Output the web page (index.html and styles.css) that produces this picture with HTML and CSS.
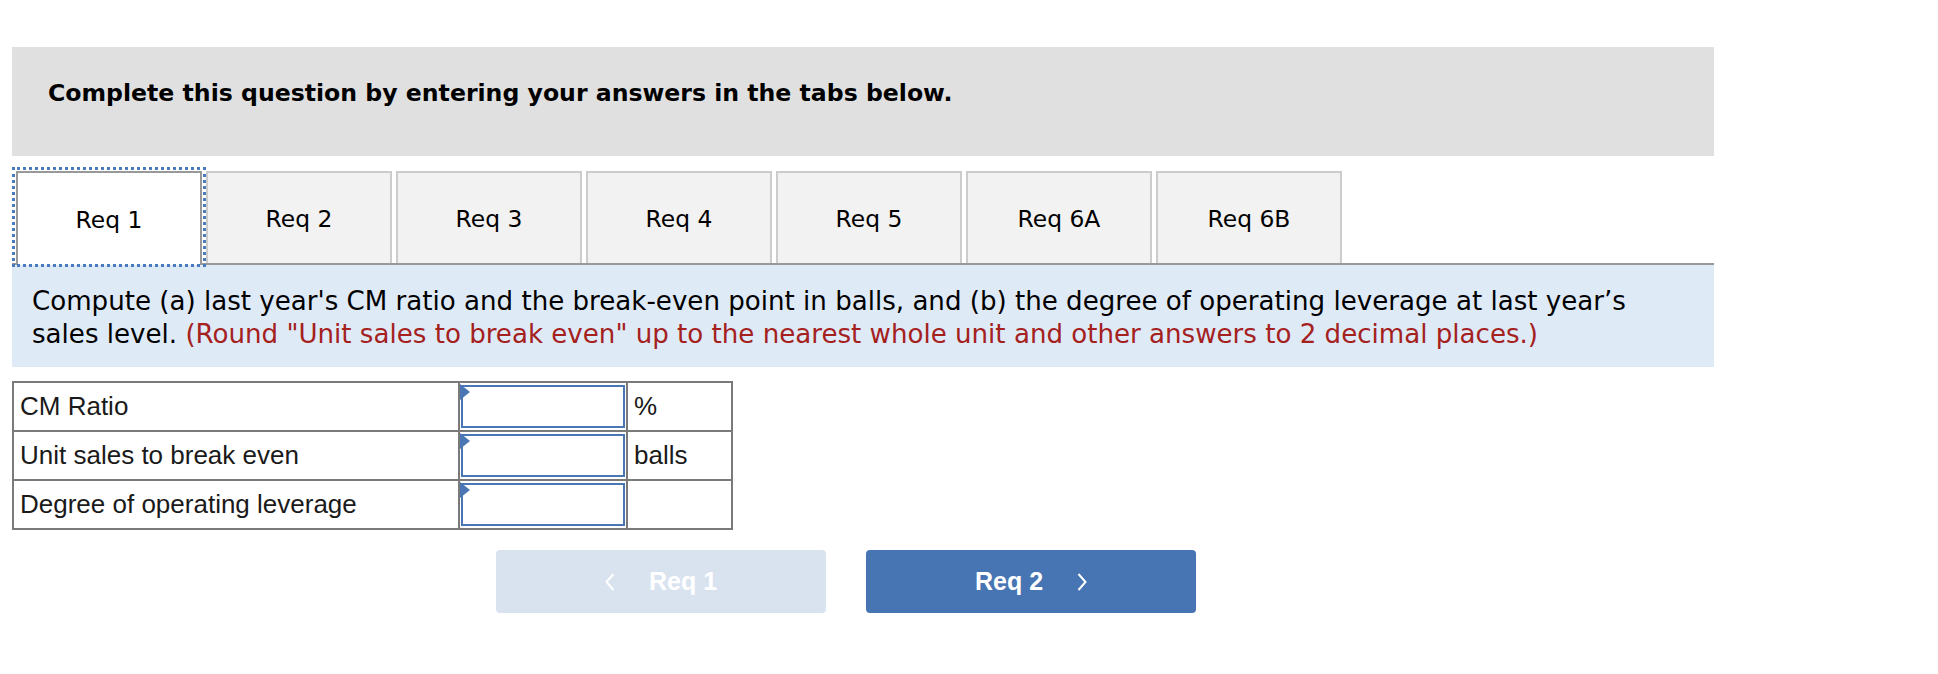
FILE: index.html
```html
<!DOCTYPE html>
<html lang="en">
<head>
<meta charset="utf-8">
<title>Req 1</title>
<link rel="stylesheet" href="styles.css">
</head>
<body>
<div class="page">
  <div class="banner">Complete this question by entering your answers in the tabs below.</div>

  <div class="tabs">
    <div class="tab active">Req 1</div>
    <div class="tab">Req 2</div>
    <div class="tab">Req 3</div>
    <div class="tab">Req 4</div>
    <div class="tab">Req 5</div>
    <div class="tab">Req 6A</div>
    <div class="tab">Req 6B</div>
  </div>

  <div class="prompt">Compute (a) last year's CM ratio and the break-even point in balls, and (b) the degree of operating leverage at last year’s sales level. <span class="hint">(Round "Unit sales to break even" up to the nearest whole unit and other answers to 2 decimal places.)</span></div>

  <table class="answers">
    <colgroup>
      <col class="c-label">
      <col class="c-field">
      <col class="c-unit">
    </colgroup>
    <tr>
      <td class="label">CM Ratio</td>
      <td class="field"><div class="box"><span class="flag"></span></div></td>
      <td class="unit">%</td>
    </tr>
    <tr>
      <td class="label">Unit sales to break even</td>
      <td class="field"><div class="box"><span class="flag"></span></div></td>
      <td class="unit">balls</td>
    </tr>
    <tr>
      <td class="label">Degree of operating leverage</td>
      <td class="field"><div class="box"><span class="flag"></span></div></td>
      <td class="unit"></td>
    </tr>
  </table>

  <div class="nav">
    <div class="btn prev">
      <svg class="chev" width="10" height="18" viewBox="0 0 10 18"><polyline points="8.5,1 1.5,9 8.5,17" fill="none" stroke="#ffffff" stroke-width="2"/></svg>
      <span>Req 1</span>
    </div>
    <div class="btn next">
      <span>Req 2</span>
      <svg class="chev" width="10" height="18" viewBox="0 0 10 18"><polyline points="1.5,1 8.5,9 1.5,17" fill="none" stroke="#ffffff" stroke-width="2"/></svg>
    </div>
  </div>
</div>
</body>
</html>
```

FILE: styles.css
```css
html, body {
  margin: 0;
  padding: 0;
  background: #ffffff;
}

.page {
  padding: 47px 0 0 12px;
  width: 1702px;
  font-family: "DejaVu Sans", Verdana, sans-serif;
  color: #000000;
}

.banner {
  background: #e0e0e0;
  height: 109px;
  box-sizing: border-box;
  padding: 30px 0 0 36px;
  font-weight: bold;
  font-size: 23.6px;
  line-height: 32px;
}

.tabs {
  display: flex;
  gap: 4px;
  margin-top: 15px;
  padding-left: 4px;
  border-bottom: 2px solid #999999;
  height: 92px;
}

.tab {
  position: relative;
  width: 186px;
  height: 92px;
  box-sizing: border-box;
  border: 2px solid #cccccc;
  border-bottom: 0;
  background: #f2f2f2;
  display: flex;
  align-items: center;
  justify-content: center;
  font-size: 23.4px;
  padding-top: 2px;
}

.tab.active {
  background: #ffffff;
  border-color: #999999;
  height: 94px;
  margin-bottom: -2px;
  z-index: 1;
}

.tab.active::after {
  content: "";
  position: absolute;
  top: -6px;
  left: -6px;
  right: -6px;
  bottom: -2px;
  border: 3px dotted #4a7bbf;
}

.prompt {
  background: #dfeaf7;
  height: 102px;
  box-sizing: border-box;
  padding: 20px 20px 0 20px;
  font-size: 26.1px;
  line-height: 33px;
}

.hint {
  color: #a4211e;
}

.answers {
  margin-top: 14px;
  border-collapse: collapse;
  table-layout: fixed;
  width: 719px;
  font-family: "Liberation Sans", Arial, sans-serif;
  font-size: 26px;
  color: #1a1a1a;
}

.c-label { width: 446px; }
.c-field { width: 168px; }
.c-unit { width: 105px; }

.answers td {
  border: 2px solid #7a7a7a;
  height: 45px;
  padding: 0;
  vertical-align: middle;
}

.answers .label {
  padding-left: 6px;
}

.answers .field {
  padding: 1px;
}

.answers .unit {
  padding-left: 6px;
}

.box {
  position: relative;
  height: 43px;
  border: 2px solid #4a77b4;
  box-sizing: border-box;
  background: #ffffff;
}

.flag {
  position: absolute;
  top: -3px;
  left: -3px;
  width: 0;
  height: 0;
  border-top: 8px solid transparent;
  border-bottom: 8px solid transparent;
  border-left: 10px solid #4a77b4;
}

.nav {
  display: flex;
  gap: 40px;
  margin-top: 20px;
  padding-left: 484px;
}

.btn {
  width: 330px;
  height: 63px;
  border-radius: 4px;
  display: flex;
  align-items: center;
  justify-content: center;
  gap: 34px;
  color: #ffffff;
  font-family: "Liberation Sans", Arial, sans-serif;
  font-weight: bold;
  font-size: 25px;
}

.btn.prev {
  background: #d9e3f0;
}

.btn.next {
  background: #4775b3;
}

.chev {
  display: block;
}
```
